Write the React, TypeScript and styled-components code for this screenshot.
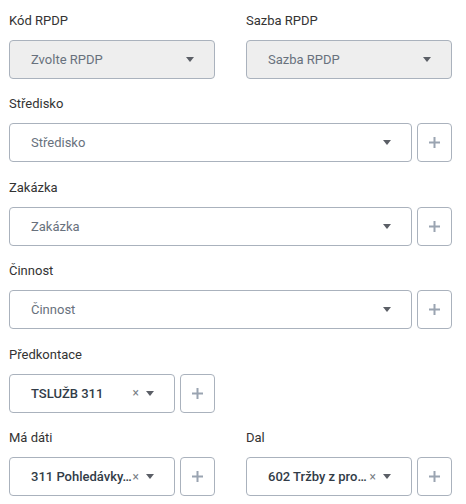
import React from "react";
import styled, { createGlobalStyle } from "styled-components";

const GlobalStyle = createGlobalStyle`
   body {
      margin: 0;
      background: #ffffff;
      font-family: Roboto, "Liberation Sans", Arial, sans-serif;
   }
`;

interface SelectProps {
   placeholder?: string;
   value?: string;
   disabled?: boolean;
   clearable?: boolean;
}

const Select = ({ placeholder, value, disabled, clearable }: SelectProps) => (
   <SelectBox $disabled={disabled}>
      {value ? <Value>{value}</Value> : <Placeholder>{placeholder}</Placeholder>}
      <Indicators>
         {clearable && <Clear>×</Clear>}
         <Caret />
      </Indicators>
   </SelectBox>
);

const AddButton = () => (
   <PlusButton type="button">
      <svg width="13" height="13" viewBox="0 0 13 13">
         <path d="M6.5 1v11M1 6.5h11" stroke="#9aa4b1" strokeWidth="2" />
      </svg>
   </PlusButton>
);

interface FieldProps {
   label: string;
   wide?: boolean;
   children: React.ReactNode;
}

const Field = ({ label, wide, children }: FieldProps) => (
   <FieldWrapper $wide={wide}>
      <Label>{label}</Label>
      <Row>{children}</Row>
   </FieldWrapper>
);

const App = () => {
   return (
      <>
         <GlobalStyle />
         <Form>
            <Field label="Kód RPDP">
               <Select placeholder="Zvolte RPDP" disabled />
            </Field>
            <Field label="Sazba RPDP">
               <Select placeholder="Sazba RPDP" disabled />
            </Field>
            <Field label="Středisko" wide>
               <Select placeholder="Středisko" />
               <AddButton />
            </Field>
            <Field label="Zakázka" wide>
               <Select placeholder="Zakázka" />
               <AddButton />
            </Field>
            <Field label="Činnost" wide>
               <Select placeholder="Činnost" />
               <AddButton />
            </Field>
            <Field label="Předkontace">
               <Select value="TSLUŽB 311" clearable />
               <AddButton />
            </Field>
            <div />
            <Field label="Má dáti">
               <Select value="311 Pohledávky…" clearable />
               <AddButton />
            </Field>
            <Field label="Dal">
               <Select value="602 Tržby z pro…" clearable />
               <AddButton />
            </Field>
         </Form>
      </>
   );
};

const Form = styled.div`
   display: grid;
   grid-template-columns: 206px 206px;
   column-gap: 31px;
   row-gap: 17.5px;
   padding: 12.5px 0 0 9px;
`;

const FieldWrapper = styled.div<{ $wide?: boolean }>`
   grid-column: ${({ $wide }) => ($wide ? "1 / -1" : "auto")};
   display: flex;
   flex-flow: column;
`;

const Label = styled.label`
   font-size: 13px;
   line-height: 16px;
   color: #333333;
   margin-bottom: 11px;
`;

const Row = styled.div`
   display: flex;
   gap: 5px;
`;

const SelectBox = styled.div<{ $disabled?: boolean }>`
   flex: 1;
   min-width: 0;
   height: 39px;
   box-sizing: border-box;
   display: flex;
   align-items: center;
   padding: 0 20px 0 21px;
   border: 1px solid #aab2bd;
   border-radius: 4px;
   background: ${({ $disabled }) => ($disabled ? "#eeeeee" : "#ffffff")};
   font-size: 13px;
`;

const Placeholder = styled.span`
   flex: 1;
   color: #68717d;
`;

const Value = styled.span`
   flex: 1;
   min-width: 0;
   color: #323c48;
   font-weight: 500;
   white-space: nowrap;
`;

const Indicators = styled.div`
   display: flex;
   align-items: center;
   gap: 7px;
`;

const Clear = styled.span`
   font-size: 12px;
   color: #7a7f87;
   line-height: 1;
`;

const Caret = styled.span`
   width: 0;
   height: 0;
   border-left: 4px solid transparent;
   border-right: 4px solid transparent;
   border-top: 5px solid #5b5f66;
`;

const PlusButton = styled.button`
   width: 35px;
   height: 39px;
   flex-shrink: 0;
   box-sizing: border-box;
   display: flex;
   align-items: center;
   justify-content: center;
   padding: 0;
   border: 1px solid #aab2bd;
   border-radius: 4px;
   background: #ffffff;
`;

export default App;
